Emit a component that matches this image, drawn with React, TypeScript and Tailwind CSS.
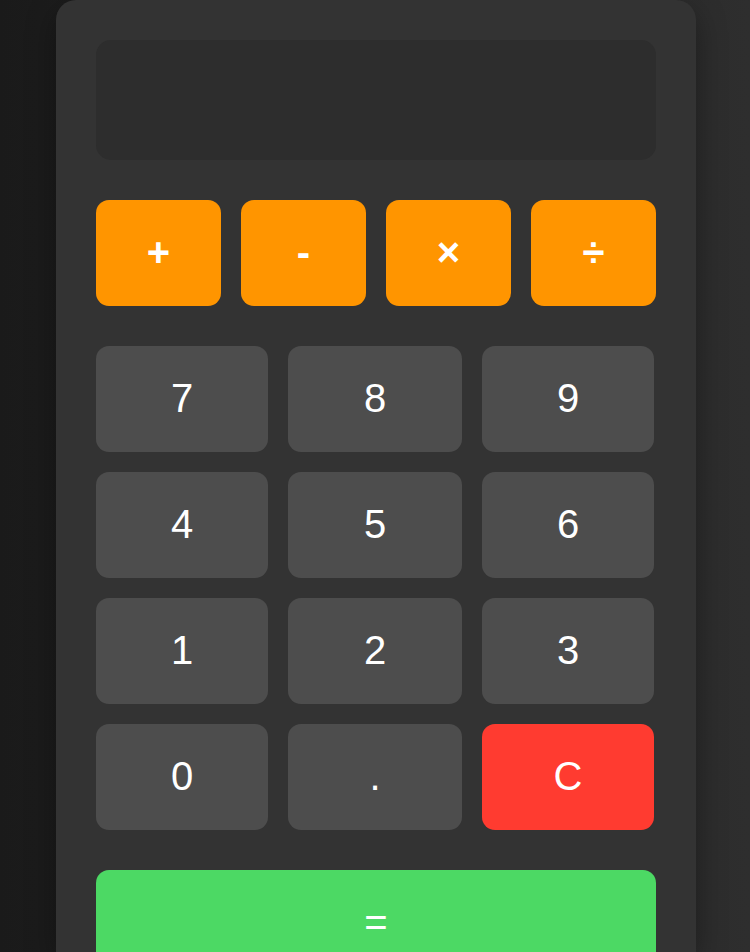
import React, { useState } from 'react';

const digitBtn =
  'h-[106px] rounded-[13px] bg-[#4d4d4d] text-white text-[40px] pb-[3px] flex items-center justify-center';

export default function App() {
  const [display, setDisplay] = useState('');

  const press = (v: string) => setDisplay((d) => d + v);

  return (
    <div
      className="min-h-screen bg-gradient-to-r from-[#1a1a1a] to-[#2e2e2e] flex"
      style={{ fontFamily: '"Liberation Sans", Arial, sans-serif' }}
    >
      <div className="ml-[56px] w-[640px] h-[952px] overflow-hidden bg-[#333333] rounded-t-[20px] p-10 shadow-[0_10px_30px_rgba(0,0,0,0.35)]">
        {/* display */}
        <div className="h-[120px] rounded-[15px] bg-[#2d2d2d] text-white text-[40px] flex items-center justify-end px-5">
          {display}
        </div>

        {/* operators */}
        <div className="mt-10 flex gap-5">
          {['+', '-', '×', '÷'].map((op) => (
            <button
              key={op}
              onClick={() => press(op)}
              className="flex-1 h-[106px] rounded-[13px] bg-[#ff9500] text-white text-[40px] font-bold pb-[2px] flex items-center justify-center"
            >
              {op}
            </button>
          ))}
        </div>

        {/* numbers */}
        <div className="mt-10 grid grid-cols-[172px_174px_172px] gap-5">
          {['7', '8', '9', '4', '5', '6', '1', '2', '3', '0', '.'].map((n) => (
            <button key={n} onClick={() => press(n)} className={digitBtn}>
              {n}
            </button>
          ))}
          <button
            onClick={() => setDisplay('')}
            className="h-[106px] rounded-[13px] bg-[#ff3b30] text-white text-[40px] pb-[3px] flex items-center justify-center"
          >
            C
          </button>
        </div>

        {/* equals */}
        <button className="mt-10 w-full h-[106px] rounded-[13px] bg-[#4cd964] text-white text-[40px] pb-[3px] flex items-center justify-center">
          =
        </button>
      </div>
    </div>
  );
}
